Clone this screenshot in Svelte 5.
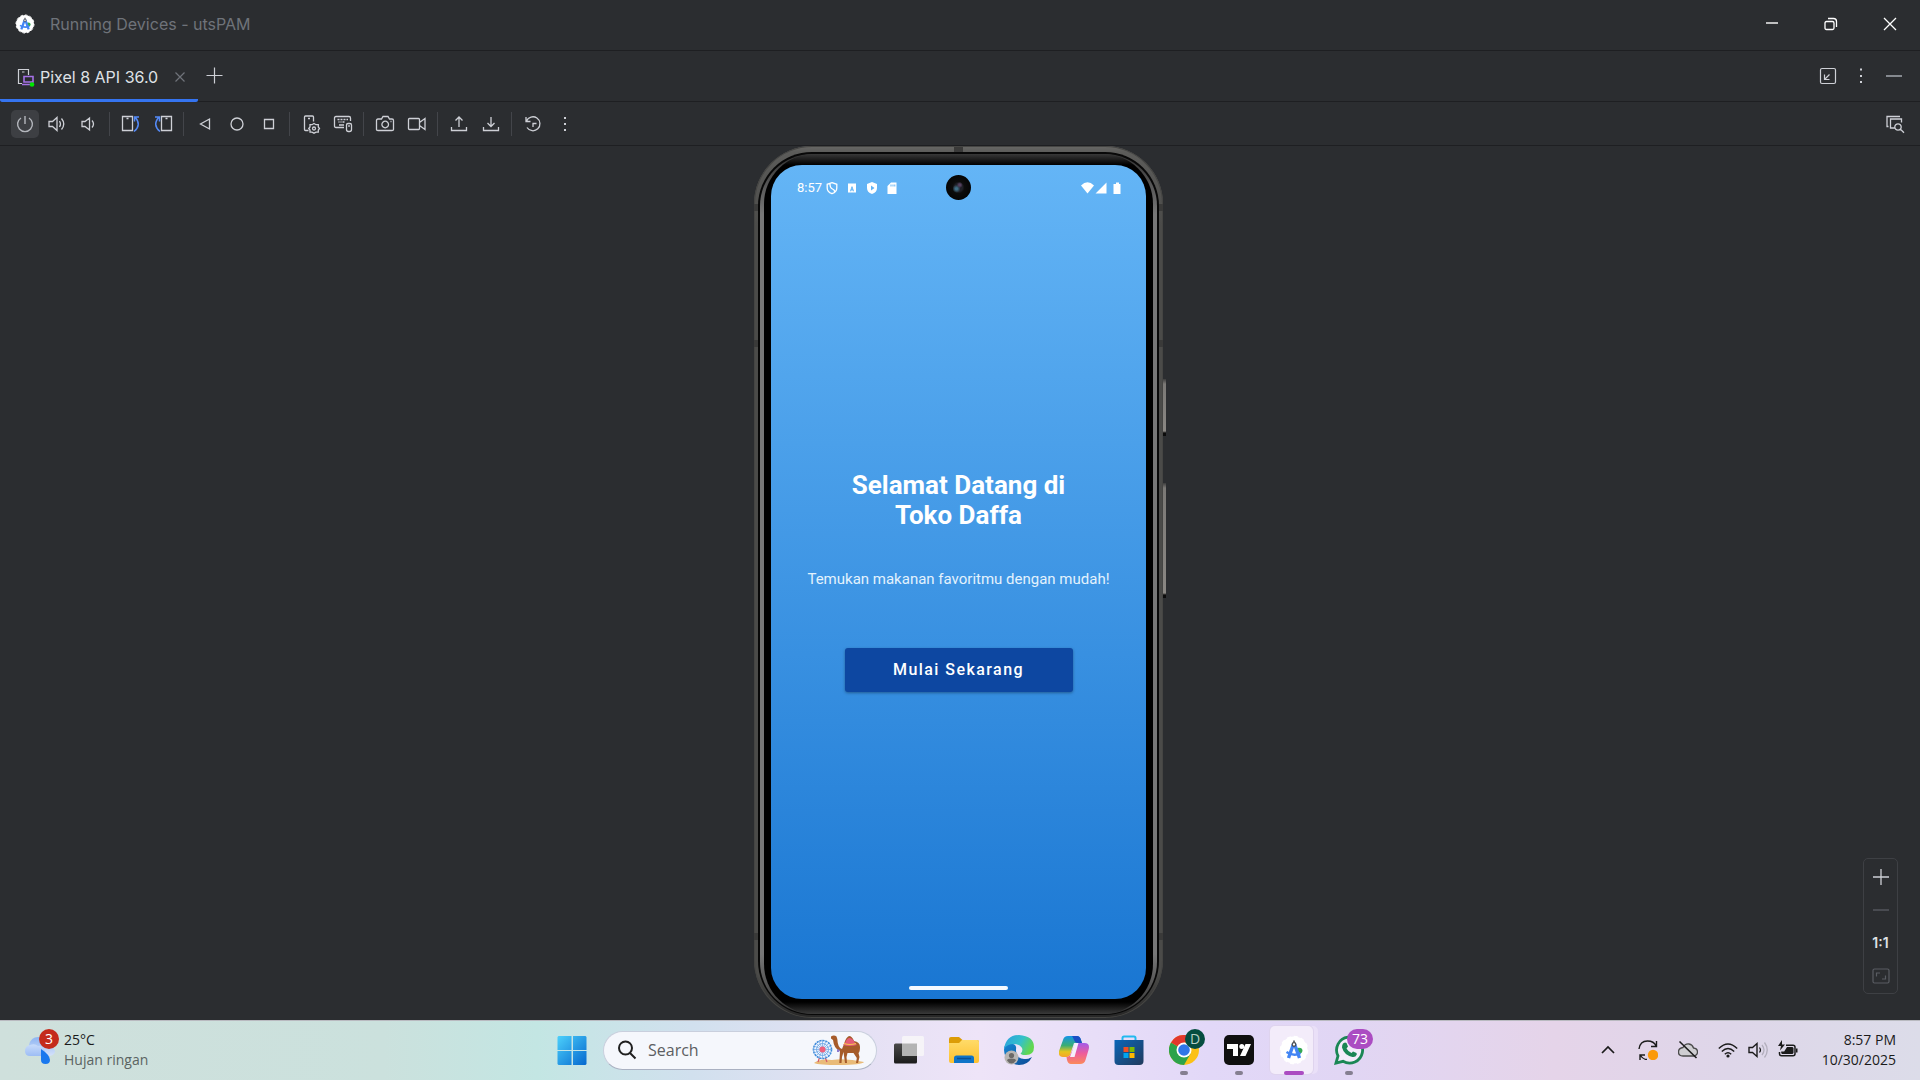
<script lang="ts">
  type Stroke = { d: string; color?: string; fill?: string; width?: number };
  type Tool = { label: string; active?: boolean; strokes: Stroke[] };

  const blue = '#548af7';
  const gray = '#ced0d6';

  const toolGroups: Tool[][] = [
    [
      { label: 'Power', active: true, strokes: [{ d: 'M6 4A7.400 7.400 0 1 0 14 4M10 2v8', color: '#b4b7bd', width: 1.4 }] },
      { label: 'Volume Up', strokes: [{ d: 'M2 7.500h3.500L10 3.500v13L5.500 12.500H2zM12.500 7q2 3 0 6M14.500 4.500q4.500 5.500 0 11' }] },
      { label: 'Volume Down', strokes: [{ d: 'M3 7.500h3L10.500 4v12L6 12.500H3zM13 6.500q3 3.500 0 7' }] },
    ],
    [
      { label: 'Rotate Left', strokes: [{ d: 'M1.500 2.500h10v14h-10zM5.500 4.500h2' }, { d: 'M13 17.500Q21 11 14 3M13.500 7.500V3H18', color: blue, width: 1.5 }] },
      { label: 'Rotate Right', strokes: [{ d: 'M8.500 2.500h10v14h-10zM12.500 4.500h2' }, { d: 'M7 17.500Q-1 11 6 3M6.500 7.500V3H2', color: blue, width: 1.5 }] },
    ],
    [
      { label: 'Back', strokes: [{ d: 'M14.500 5v10L5.500 10z' }] },
      { label: 'Home', strokes: [{ d: 'M16 10a6 6 0 1 1-12 0a6 6 0 1 1 12 0z' }] },
      { label: 'Overview', strokes: [{ d: 'M5.500 5.500h9v9h-9z' }] },
    ],
    [
      { label: 'Device Settings', strokes: [{ d: 'M12.500 7.500V3q0-1-1-1h-7q-1 0-1 1v12.500q0 1 1 1h3M7 4.500h2' }, { d: 'M13 9.500l2 1.200 2.300 0v2.300l1.200 1.500-1.200 1.500v2.200H15l-2 1-2-1H9v-2.200L7.700 14.500 9 13v-2.300h2zM14.500 14.500a1.500 1.500 0 1 1-3 0a1.500 1.500 0 1 1 3 0z' }] },
      { label: 'Hardware Input', strokes: [{ d: 'M11 13.500H3q-1.500 0-1.500-1.500V4q0-1.500 1.500-1.500h13q1.500 0 1.500 1.500v3M4.500 5.500h2m1 0h2m1 0h2m1 0h1.500M5.500 8h1m1 0h1m1 0h2M6 11h5M13.500 11q0-1.500 1.500-1.500h2q1.500 0 1.500 1.500v4.500q0 2-2 2h-1q-2 0-2-2zM16 11v2' }] },
    ],
    [
      { label: 'Take Screenshot', strokes: [{ d: 'M3 5h3.500L8 2.500h5L14.500 5H17q1.500 0 1.500 1.500v9q0 1-1.500 1H3q-1.500 0-1.500-1v-9Q1.500 5 3 5zM13.500 10.500a3.300 3.300 0 1 1-6.600 0a3.300 3.300 0 1 1 6.600 0z' }, { d: 'M15.500 7.500h1' }] },
      { label: 'Record Screen', strokes: [{ d: 'M2.500 4.500h9q1 0 1 1v9q0 1-1 1h-9q-1 0-1-1v-9q0-1 1-1zM12.500 8.500l5.500-4v11l-5.500-4' }] },
    ],
    [
      { label: 'Upload', strokes: [{ d: 'M2.500 13v3.500h15V13M10 13V3M6.500 6.500L10 3l3.500 3.500' }] },
      { label: 'Download', strokes: [{ d: 'M2.500 13v3.500h15V13M10 3v9.500M6.500 9l3.500 3.500L13.500 9' }] },
    ],
    [
      { label: 'Snapshots', strokes: [{ d: 'M3 3v4.500h4.500M3.500 7A7 7 0 1 1 4 13.500M10 13V9.500h3.500' }] },
      { label: 'More Actions', strokes: [{ d: 'M9 3h2v2H9zM9 9h2v2H9zM9 15h2v2H9z', fill: gray, width: 0 }] },
    ],
  ];
</script>

{#snippet icon(strokes: Stroke[])}
  <svg class="ic" viewBox="0 0 20 20" aria-hidden="true">
    {#each strokes as s}
      <path d={s.d} fill={s.fill ?? 'none'} stroke={s.color ?? gray} stroke-width={s.width ?? 1.3} />
    {/each}
  </svg>
{/snippet}

{#snippet studio()}
  <circle cx="15" cy="15" r="13.500" fill="#fff" />
  <circle cx="15" cy="15" r="13.500" fill="none" stroke="#fff" stroke-width="1.500" stroke-dasharray="4 3" />
  <path d="M18 13q5.500-1 5.500 3l-1 2-3 1z" fill="#34a853" />
  <path d="M14.500 9L9.500 23M15.500 9L20.500 23" stroke="#4285f4" stroke-width="3.400" fill="none" />
  <path d="M7.500 17q7.500 5 14 1" stroke="#4285f4" stroke-width="2.400" fill="none" />
  <circle cx="15" cy="9.500" r="1.800" fill="#fff" stroke="#4a4e53" stroke-width="1.300" />
  <path d="M15 5.500v2" stroke="#4a4e53" stroke-width="1.600" />
{/snippet}

<div class="desktop">
  <header class="titlebar">
    <svg class="logo" viewBox="0 0 30 30" aria-hidden="true">{@render studio()}</svg>
    <h1>Running Devices - utsPAM</h1>
    <div class="winctl">
      <button aria-label="Minimize"><svg class="ic" viewBox="0 0 20 20"><path d="M4 9h12" stroke="#fff" stroke-width="1.400" /></svg></button>
      <button aria-label="Restore"><svg class="ic" viewBox="0 0 20 20"><path d="M5.500 7.500h6q1.500 0 1.500 1.500v5q0 1.500-1.500 1.500h-6Q4 15.500 4 14V9q0-1.500 1.500-1.500zM7 4.500h5.500q3 0 3 3V13" fill="none" stroke="#fff" stroke-width="1.300" /></svg></button>
      <button aria-label="Close"><svg class="ic" viewBox="0 0 20 20"><path d="M4 4l12 12M16 4L4 16" stroke="#fff" stroke-width="1.300" /></svg></button>
    </div>
  </header>

  <nav class="tabs">
    <div class="tab">
      <svg class="ic" viewBox="0 0 20 20" aria-hidden="true">
        <path d="M6 16.500H2.500v-14h10V8M6 5h2.500" fill="none" stroke={gray} stroke-width="1.200" />
        <path d="M8 9.500h9v5.500H8zM6 17.500h8" fill="none" stroke="#a571e6" stroke-width="1.600" />
        <circle cx="16" cy="17.500" r="2.300" fill="#00e800" />
      </svg>
      <button class="tabname">Pixel 8 API 36.0</button>
      <button class="close" aria-label="Close tab"><svg class="ic" viewBox="0 0 20 20"><path d="M5.500 5.500l9 9M14.500 5.500l-9 9" stroke="#6f737a" stroke-width="1.200" /></svg></button>
    </div>
    <button class="add" aria-label="Add device"><svg class="ic" viewBox="0 0 20 20"><path d="M10.500 1.500v16M2.500 9.500h16" stroke={gray} stroke-width="1.200" /></svg></button>
    <div class="tabactions">
      <button aria-label="Dock"><svg class="ic" viewBox="0 0 20 20"><path d="M4 2.500h12q1.500 0 1.500 1.500v12q0 1.500-1.500 1.500H4Q2.500 17.500 2.500 16V4Q2.500 2.500 4 2.500zM11.500 8.500L6.500 13.500M6.500 8.500v5h5" fill="none" stroke={gray} stroke-width="1.200" /></svg></button>
      <button aria-label="Options"><svg class="ic" viewBox="0 0 20 20"><path d="M9 2.500h2v2H9zM9 9h2v2H9zM9 15h2v2H9z" fill={gray} /></svg></button>
      <button aria-label="Hide"><svg class="ic" viewBox="0 0 20 20"><path d="M2 10h16" stroke="#9da0a8" stroke-width="1.600" /></svg></button>
    </div>
  </nav>

  <div class="toolbar">
    {#each toolGroups as group, g}
      {#if g > 0}<span class="sep"></span>{/if}
      {#each group as tool}
        <button class="tool" class:active={tool.active} aria-label={tool.label}>{@render icon(tool.strokes)}</button>
      {/each}
    {/each}
    <button class="tool last" aria-label="UI Check">
      {@render icon([{ d: 'M3.500 12.500H2v-10h13M10 14H5.500V5h11v3.500M16.200 13a3.200 3.200 0 1 1-6.400 0a3.200 3.200 0 1 1 6.400 0zM15.500 15.300l3.500 3.500' }])}
    </button>
  </div>

  <main>
    <div class="device">
      <div class="shell">
        <div class="groove"><div class="rail"><div class="bezel">
          <div class="screen">
            <div class="status">
              <span>8:57</span>
              <svg viewBox="0 0 12 14" width="12" height="14"><path d="M6 1.700L10.800 3.300V7q0 4-4.800 5.700Q1.200 11 1.200 7V3.300zM4 3q0 4 2.500 5T8.500 11" fill="none" stroke="#fff" stroke-width="1.300" /></svg>
              <svg viewBox="0 0 12 14" width="12" height="14"><path fill-rule="evenodd" d="M2 2.500h8v9H2zM4 10.300h1.200l.3-1h1l.3 1H8L6.500 5.500h-1zM5.700 8.200h.6L6 6.800z" fill="#fff" /></svg>
              <svg viewBox="0 0 12 14" width="12" height="14"><path fill-rule="evenodd" d="M6 1L11 3v4q0 4.500-5 6Q1 11.500 1 7V3zM5 4.500v5L8.500 7z" fill="#fff" /></svg>
              <svg viewBox="0 0 12 14" width="12" height="14"><path fill-rule="evenodd" d="M5 1.500h5.500v11.500h-9V5zM4.500 3.500v2h1v-2zM6.500 3.500v2h1v-2zM8.300 3.500v2h1v-2z" fill="#fff" /></svg>
              <svg class="signal" viewBox="0 0 42 14" width="42" height="14"><path d="M1 4.500q6.500-6.500 13 0L7.500 12.500zM15.500 12.500h11V1.500zM33.500 3H36V1.500h3V3h1.500v10h-7z" fill="#fff" /></svg>
            </div>
            <div class="welcome">
              <h2>Selamat Datang di<br />Toko Daffa</h2>
              <p>Temukan makanan favoritmu dengan mudah!</p>
              <button>Mulai Sekarang</button>
            </div>
            <div class="gesture"><span></span></div>
            <span class="camera"></span>
          </div>
        </div></div></div>
      </div>
      <i class="key power"></i>
      <i class="key volume"></i>
      <i class="band left high"></i><i class="band left mid"></i><i class="band left low"></i>
      <i class="band right high"></i><i class="band right mid"></i><i class="band right low"></i>
      <i class="band top"></i>
    </div>

    <div class="zoom">
      <button aria-label="Zoom In"><svg class="ic" viewBox="0 0 20 20"><path d="M10 2v16M2 10h16" stroke={gray} stroke-width="1.300" /></svg></button>
      <button aria-label="Zoom Out"><svg class="ic" viewBox="0 0 20 20"><path d="M2 10h16" stroke="#5a5d63" stroke-width="1.300" /></svg></button>
      <button>1:1</button>
      <button aria-label="Zoom to Fit"><svg class="ic" viewBox="0 0 20 20"><path d="M3.500 3h13q1.500 0 1.500 1.500v11q0 1.500-1.500 1.500h-13Q2 17 2 15.500v-11Q2 3 3.500 3zM5.500 10.500V7H9M14.500 9.500V13H11" fill="none" stroke="#5a5d63" stroke-width="1.200" /></svg></button>
    </div>
  </main>

  <footer class="taskbar">
    <button class="weather">
      <span class="wicon">
        <svg viewBox="0 0 32 30" width="32" height="30" aria-hidden="true">
          <defs>
            <linearGradient id="cloud" x2="0" y2="1"><stop stop-color="#8db4f2" /><stop offset="1" stop-color="#d5e2fa" /></linearGradient>
            <linearGradient id="cloud2" x2="0" y2="1"><stop stop-color="#c9dcfb" /><stop offset="1" stop-color="#9dbdf5" /></linearGradient>
          </defs>
          <path d="M5 10Q7 1 16 2q9 0 10 9 5 2 5 6-1 4-7 4H9z" fill="url(#cloud)" />
          <path d="M6 21q-5 0-5-5t5-6q5-2 8 1 3-1 5 2 4 4 1 8z" fill="url(#cloud2)" />
          <path d="M17 14q9 6 9 11 0 4-4.500 4T17 25z" fill="#1a78ee" />
        </svg>
        <b>3</b>
      </span>
      <span class="lines"><span>25°C</span><span class="dim">Hujan ringan</span></span>
    </button>

    <div class="apps">
      <button class="app start" aria-label="Start">
        <svg viewBox="0 0 30 30">
          <defs><linearGradient id="win" x2="1" y2="1"><stop stop-color="#4cd0fb" /><stop offset="1" stop-color="#0568cf" /></linearGradient></defs>
          <path d="M1.500 1h13v14h-14V2zM16 1h12.500l1 1v13H16zM.5 16h14v14h-13l-1-1zM16 16h13.500v13l-1 1H16z" fill="url(#win)" />
        </svg>
      </button>
      <label class="search">
        <svg class="ic" viewBox="0 0 20 20" aria-hidden="true"><path d="M15 8a6.500 6.500 0 1 1-13 0a6.500 6.500 0 1 1 13 0zM13 13l5.500 5.500" fill="none" stroke="#202020" stroke-width="2" /></svg>
        <input type="text" placeholder="Search" aria-label="Search" />
        <svg class="camel" viewBox="0 0 54 32" aria-hidden="true">
          <path d="M2 29q6-5 18-3 14-2 32 2-2 3-25 3-20 0-25-2z" fill="#e9bb78" />
          <path d="M10 16L6 28M10 16l5 12" stroke="#d5576b" stroke-width="1.200" />
          <circle cx="10.500" cy="15.500" r="9" fill="#eef4ff" stroke="#3e8bda" stroke-width="1.600" stroke-dasharray="2.200 .8" />
          <circle cx="10.500" cy="15.500" r="6" fill="none" stroke="#7ab1e8" stroke-width="1" />
          <path d="M10.500 6v19M1 15.500h19M4 9l13 13M17 9L4 22M7 7l7 17M14 7L7 24M2 12l17 7M19 12L2 19" stroke="#6ba5e2" stroke-width=".7" />
          <circle cx="10.500" cy="15.500" r="3" fill="#f0607c" />
          <path d="M19 2.500q3-2 5.500 0l.8 2.500q.5 9 4.700 10l2-5q2-7 5-8 3 0 5 5 6 1 6 6 0 5-1.500 6l1 4-1.500 6h-2l.8-5-3.300-5h-6l-1 4 .5 6h-2l-.8-6-.7-5-1.500 5-.5 6h-2.200l.7-12q-6-2-7-11L19 4.500z" fill="#a65b2a" />
          <path d="M33 9q2-5 4.500-5 3 0 5.500 5l2 2q-7 2-14 0z" fill="#e45d78" />
          <path d="M32 9.500q6 2 12 0" stroke="#f7c64b" stroke-width="1.200" fill="none" />
          <path d="M25 15l3 1-1 2h-2z" fill="#8c7bd0" />
        </svg>
      </label>
      <button class="app" aria-label="Task View">
        <svg viewBox="0 0 30 30">
          <defs><linearGradient id="tv" x2="0" y2="1"><stop stop-color="#4a4a4a" /><stop offset="1" stop-color="#1b1b1b" /></linearGradient></defs>
          <rect x="0" y="8.500" width="23" height="20" rx="1.500" fill="url(#tv)" /><rect x="8" y="1" width="22" height="20" rx="1.500" fill="#f6f4f8" /><path d="M8 8.500h15V21H9.500Q8 21 8 19.500z" fill="#b3b3b3" />
        </svg>
      </button>
      <button class="app" aria-label="File Explorer">
        <svg viewBox="0 0 30 30">
          <defs><linearGradient id="fold" x2="0" y2="1"><stop stop-color="#ffdb69" /><stop offset="1" stop-color="#fdc02f" /></linearGradient></defs>
          <path d="M0 4q0-2 2-2h8l3.500 3H28q2 0 2 2v4H0z" fill="#dc9c07" /><path d="M0 8h10l3-3h15q2 0 2 2v19q0 2-2 2H2q-2 0-2-2z" fill="url(#fold)" /><path d="M5 28v-5q0-2.500 2.500-2.500h15Q25 20.500 25 23v5z" fill="#0f74c8" /><path d="M8 23.500h14" stroke="#0a4f94" stroke-width="1.500" />
        </svg>
      </button>
      <button class="app" aria-label="Edge">
        <svg viewBox="0 0 30 30">
          <defs>
            <linearGradient id="e1" x2="1" y2=".4"><stop stop-color="#2a9fe1" /><stop offset=".6" stop-color="#35c1c9" /><stop offset="1" stop-color="#62d74f" /></linearGradient>
            <linearGradient id="e2" x2="1" y2="1"><stop stop-color="#1687d4" /><stop offset="1" stop-color="#0c4a94" /></linearGradient>
          </defs>
          <path d="M0 15q0-9 9-6 4 1 3 6 0 9 9 9 4 0 7-2-4 8-13 8Q1 29 0 15z" fill="url(#e2)" />
          <path d="M0 14Q2 0 15 0q15 1 15 12 0 8-8 8-6 0-6-2 3-2 2-5-2-4-8-4Q3 9 0 14z" fill="url(#e1)" />
          <path d="M12 14q3-3 6-.5 1 3-1.500 5 1 2 4 3 3 1 7 0-3 3-8 2-7-2-7.500-9.500z" fill="#eee6fa" />
          <circle cx="7.500" cy="22.500" r="7" fill="#b8b6b4" /><circle cx="7.500" cy="20.500" r="2.600" fill="#6b6967" /><path d="M3 25.500q0-2 4.500-2t4.500 2q-2 3-4.500 3t-4.500-3z" fill="#6b6967" />
        </svg>
      </button>
      <button class="app" aria-label="Copilot">
        <svg viewBox="0 0 30 30">
          <defs>
            <linearGradient id="c1" x2="0" y2="1"><stop stop-color="#1494e8" /><stop offset=".45" stop-color="#39ad74" /><stop offset=".75" stop-color="#e6c51e" /><stop offset="1" stop-color="#f5a52a" /></linearGradient>
            <linearGradient id="c2" x2="0" y2="1"><stop stop-color="#a25bea" /><stop offset=".5" stop-color="#ee5c9a" /><stop offset="1" stop-color="#fb8a5a" /></linearGradient>
          </defs>
          <path d="M9 1h9q3 0 4 4l1 3h-8l-4 12q-1 2-3 2H4q-5 0-4-6L4 5q1-4 5-4z" fill="url(#c1)" />
          <path d="M13 1h5q3 0 4 4l1 3h-5q-2 0-3-3-1-3-2-4z" fill="#1c4fc4" />
          <path d="M21 29h-9q-3 0-4-4l-.5-3q3 0 4-3l4-8q1-3 3-3h7q6 0 4 7l-3 10q-1 4-5.500 4z" fill="url(#c2)" />
          <path d="M16 8h3.500l-4 14H11z" fill="#f5eefb" />
        </svg>
      </button>
      <button class="app" aria-label="Microsoft Store">
        <svg viewBox="0 0 30 30">
          <defs><linearGradient id="st" x2="1" y2="1"><stop stop-color="#0b66b8" /><stop offset="1" stop-color="#213a5c" /></linearGradient></defs>
          <path d="M8.500 6V3q0-1.500 1.500-1.500h10q1.500 0 1.500 1.500v3" fill="none" stroke="#22b9ef" stroke-width="2" /><path d="M.5 5h29v21q0 4-4 4h-21q-4 0-4-4z" fill="url(#st)" />
          <path d="M9.500 12H14.500v5H9.500z" fill="#f25022" /><path d="M15.500 12h5v5h-5z" fill="#7fba00" /><path d="M9.500 18h5v5h-5z" fill="#00a4ef" /><path d="M15.500 18h5v5h-5z" fill="#ffb900" />
        </svg>
      </button>
      <button class="app running" aria-label="Chrome">
        <svg viewBox="0 0 30 30">
          <circle cx="15" cy="15" r="15" fill="#fbc116" /><path d="M15 15L2 7.500A15 15 0 0 0 15 30l6.500-11.200z" fill="#2da34b" /><path d="M15 15L2 7.500A15 15 0 0 1 28 7.500H15z" fill="#e2382c" />
          <circle cx="15" cy="15" r="7.500" fill="#fff" /><circle cx="15" cy="15" r="5.800" fill="#2f76e8" />
        </svg>
        <b class="badge profile">D</b>
      </button>
      <button class="app running" aria-label="TradingView">
        <svg viewBox="0 0 30 30"><rect width="30" height="30" rx="5" fill="#101010" /><path d="M3 9h11v12H9v-7H3zM21.500 9H27l-5.500 12H16z" fill="#fff" /><circle cx="17.800" cy="11.500" r="2.500" fill="#fff" /></svg>
      </button>
      <button class="app running current" aria-label="Android Studio">
        <svg viewBox="0 0 30 30">{@render studio()}</svg>
      </button>
      <button class="app running" aria-label="WhatsApp">
        <svg viewBox="0 0 30 30">
          <path d="M2 28l2-7A13 13 0 1 1 9 26.300z" fill="#f3ecfa" stroke="#1b8755" stroke-width="2.800" />
          <path d="M9 8.500l2-1 1.500.5 1.500 3.500-1.500 2q2 3.500 5 4.500l1.500-1.500 3.500 1.500.3 1.500q-1.300 3-4.300 2.500Q10 20 8 12.500 8 10 9 8.500z" fill="#1b8755" />
        </svg>
        <b class="badge count">73</b>
      </button>
    </div>

    <div class="tray">
      <button class="chev" aria-label="Show hidden icons"><svg class="ic" viewBox="0 0 20 20"><path d="M4 13l6-6 6 6" fill="none" stroke="#1b1b1b" stroke-width="1.700" /></svg></button>
      <button class="wide" aria-label="Update"><svg class="ic" viewBox="0 0 20 20"><path d="M1 9Q2 1 9.500 1 16 1 18 6M18.500 1v5.500H13M2 20v-5h5M2.500 15.500Q5 19.500 9 19.500" fill="none" stroke="#1b1b1b" stroke-width="1.400" /><circle cx="15" cy="15" r="5.200" fill="#fb9a0b" /></svg></button>
      <button class="wide" aria-label="OneDrive"><svg class="ic" viewBox="0 0 20 20"><path d="M5 16q-4.500 0-4.500-4T5 7.500Q7 3.500 11 4q3.500.5 4.500 4 4 .5 4 4T15.500 16z" fill="#cfced2" stroke="#4a4a4a" stroke-width="1.300" /><path d="M1.500 1.500L18.500 18" stroke="#1b1b1b" stroke-width="1.600" /></svg></button>
      <button class="status-set" aria-label="Network, volume and battery">
        <svg class="ic" viewBox="0 0 20 20"><path d="M.8 8.500q9.200-9 18.400 0M3.800 11.500q6.200-6 12.400 0M6.800 14.300q3.200-3 6.400 0" fill="none" stroke="#1b1b1b" stroke-width="1.400" /><circle cx="10" cy="16" r="1.600" fill="#1b1b1b" /></svg>
        <svg class="ic" viewBox="0 0 20 20"><path d="M1 7.500h3.500L9 3.500v13L4.500 12.500H1z" fill="none" stroke="#1b1b1b" stroke-width="1.400" /><path d="M11.500 7.500q2 2.500 0 5" fill="none" stroke="#1b1b1b" stroke-width="1.200" /><path d="M14 5q4 5 0 10M16.500 2.500q5.500 7.500 0 15" fill="none" stroke="#b3afbd" stroke-width="1.300" /></svg>
        <svg class="ic" viewBox="0 0 20 20"><path d="M8 5.200h7q2 0 2 2v6.600q0 2-2 2H3.500q-2 0-2-2V12" fill="none" stroke="#1b1b1b" stroke-width="1.500" /><path d="M9 7h5.500l1 1v5l-1 1H4l-.8-1V11.500h3zM18 8.500h1.500v4H18zM4 0L0 6h3L2 10.500 7 4.500H4z" fill="#1b1b1b" /></svg>
      </button>
      <button class="clock lines"><span>8:57 PM</span><span>10/30/2025</span></button>
    </div>
  </footer>
</div>

<style>
  :global(body) { margin: 0; background: #2b2d30; }
  .desktop { display: flex; flex-direction: column; min-height: 100vh; font-family: Inter, "Liberation Sans", sans-serif; font-size: 16px; line-height: 20px; color: #dfe1e5; }
  button { display: flex; align-items: center; justify-content: center; padding: 0; border: 0; background: none; color: inherit; font: inherit; }
  svg { display: block; flex: none; }
  .ic { width: 20px; height: 20px; }

  .titlebar, .tabs, .toolbar { display: flex; align-items: center; box-sizing: border-box; border-bottom: 1px solid #1e1f22; }
  .titlebar { height: 51px; padding: 0 1px 2px 15px; }
  .logo { width: 20px; height: 20px; }
  h1 { margin: 0 0 0 15px; font-size: 16px; font-weight: 400; color: #6f737a; }
  .winctl { display: flex; margin-left: auto; }
  .winctl button { width: 59px; height: 50px; }

  .tabs { height: 51px; padding-right: 16px; }
  .tab { display: flex; align-items: center; align-self: flex-start; box-sizing: border-box; height: 51px; padding: 4px 8px 0 16px; border-bottom: 3px solid #3574f0; border-radius: 0 0 2px 2px; }
  .tabname { margin-left: 4px; }
  .close { margin-left: 12px; }
  .add { margin-left: 6px; }
  .tabactions { display: flex; gap: 13px; margin-left: auto; }

  .toolbar { height: 44px; padding: 0 11px; gap: 4px; }
  .tool { width: 28px; height: 28px; border-radius: 5px; }
  .active { background: #3d3f43; }
  .last { margin-left: auto; }
  .sep { width: 1px; height: 24px; margin: 0 3px 0 2px; background: #43454a; }

  main { position: relative; display: flex; flex: 1; justify-content: center; padding-bottom: 2px; }
  .device { position: relative; display: flex; width: 409px; padding-right: 3px; }
  .shell { display: flex; flex: 1; box-sizing: border-box; padding: 6px 4px 3px; border-radius: 58px; background: linear-gradient(#686866, #5c5c5a 6px, #4b4b49 80px, #4b4b49 95%, #262626); box-shadow: inset 0 0 0 1px #454543; }
  .groove { display: flex; flex: 1; padding: 2px 2px 1px; border-radius: 54px; background: #080808; }
  .rail { display: flex; flex: 1; padding: 0 4px; border-radius: 52px; background: linear-gradient(#333, #777 60px, #777 calc(100% - 60px), #333); }
  .bezel { display: flex; flex: 1; padding: 11px 7px 15px; border-radius: 50px; background: linear-gradient(#383838, #000 11px, #000 calc(100% - 12px), #3a3a3a); }
  .screen { position: relative; display: flex; flex: 1; flex-direction: column; border-radius: 31px; background: linear-gradient(#64b5f6, #1976d2); color: #fff; font-family: Roboto, sans-serif; }
  .status { display: flex; align-items: center; box-sizing: border-box; height: 46px; padding: 0 24px 0 26px; gap: 8px; font-size: 13px; }
  .status span { margin-right: -4px; }
  .signal { margin-left: auto; }
  .welcome { display: flex; flex: 1; flex-direction: column; align-items: center; justify-content: center; padding-bottom: 3px; text-align: center; }
  h2 { margin: 0; font-size: 26px; line-height: 30px; font-weight: 700; }
  p { margin: 39px 0 59px; font-size: 15px; line-height: 20px; color: #e3f2fd; }
  .welcome button { width: 228px; height: 44px; border-radius: 3px; background: #0d47a1; box-shadow: 0 1px 3px rgb(0 0 0 / 35%); font-size: 16px; font-weight: 500; letter-spacing: 0.09em; }
  .gesture { display: flex; align-items: flex-end; justify-content: center; box-sizing: border-box; height: 46px; padding-bottom: 9px; }
  .gesture span { width: 99px; height: 4px; border-radius: 2px; background: #f4f9ff; }
  .camera { position: absolute; top: 10px; left: 50%; width: 25px; height: 25px; margin-left: -13px; border-radius: 50%; background: radial-gradient(circle at 55% 40%, #54405e 0 1px, transparent 3px), radial-gradient(circle at 42% 55%, #3f6f86 0 1px, transparent 4px), radial-gradient(circle, #202028 0 4px, #0c0c0c 6px, #000); }
  .key { position: absolute; right: 0; width: 3px; background: linear-gradient(#3c3c3c, #7b7976 5px, #8a8783 calc(100% - 5px), #0c0c0c calc(100% - 3px)); }
  .power { top: 233px; height: 57px; }
  .volume { top: 337px; height: 115px; }
  .band { position: absolute; background: #3a3a39; }
  .left, .right { width: 4px; height: 7px; }
  .left { left: 0; }
  .right { right: 3px; }
  .high { top: 58px; }
  .mid { top: 194px; }
  .low { bottom: 78px; }
  .top { top: 1px; left: 200px; width: 9px; height: 5px; }

  .zoom { position: absolute; right: 22px; bottom: 26px; display: grid; box-sizing: border-box; width: 35px; padding: 1px 0; border: 1px solid #3e4044; border-radius: 5px; }
  .zoom button { height: 33px; font-size: 14px; font-weight: 600; }

  .taskbar { display: grid; grid-template-columns: 1fr auto 1fr; align-items: center; box-sizing: border-box; height: 60px; padding-bottom: 2px; border-top: 1px solid #b9bac0; background: linear-gradient(90deg, #cfe0dc, #cbe1dd 20%, #c3e6e3 28%, #d1e0ee 36%, #e5e1f4 45%, #eee4f8 51%, #e2d8f8 63%, #e1d6f4 70%, #e5d4e9 81%, #ded6e9 90%, #dcdce9); color: #1b1b1b; font-family: "Open Sans", "Noto Sans", sans-serif; font-size: 14px; }
  .weather { justify-self: start; padding-left: 24px; gap: 8px; }
  .wicon { position: relative; }
  .wicon b { position: absolute; top: -6px; right: -3px; width: 20px; height: 20px; border-radius: 50%; background: #c42b1c; color: #fff; font-weight: 400; text-align: center; }
  .lines { display: flex; flex-direction: column; align-items: flex-start; line-height: 20px; }
  .dim { color: #5b6462; }
  .apps { display: flex; align-items: center; }
  .app { position: relative; width: 55px; height: 58px; }
  .app > svg { width: 30px; height: 30px; }
  .search { display: flex; align-items: center; box-sizing: border-box; width: 274px; height: 39px; margin: 0 4px; padding: 0 10px 0 13px; border: 1px solid #c9cfdd; border-bottom-color: #aab1c2; border-radius: 20px; background: #f5f7fc; }
  .search input { flex: 1; min-width: 0; margin-left: 11px; padding: 0; border: 0; outline: 0; background: none; color: #1b1b1b; font: inherit; font-size: 16px; }
  .search input::placeholder { color: #5c5e62; opacity: 1; }
  .camel { width: 54px; height: 32px; }
  .running::after { content: ""; position: absolute; bottom: 4px; left: 50%; width: 8px; height: 4px; margin-left: -4px; border-radius: 2px; background: #857f90; }
  .current { isolation: isolate; }
  .current::before { content: ""; position: absolute; z-index: -1; top: 5px; bottom: 5px; left: 4px; width: 43px; border-radius: 5px; background: #f3ecfa; box-shadow: 0 0 0 1px #dfd4ee, 5px 0 0 #eae0f8; }
  .current::after { width: 20px; margin-left: -10px; background: #ab4cc2; }
  .badge { position: absolute; top: 8px; height: 20px; border-radius: 10px; color: #fff; font-weight: 400; text-align: center; }
  .profile { right: 6px; width: 20px; background: #054d40; color: #b7cfc5; }
  .count { right: 3px; width: 26px; background: #ab4cc2; }
  .tray { display: flex; align-items: center; justify-self: end; padding-right: 24px; }
  .wide { margin-left: 20px; }
  .status-set { gap: 10px; margin-left: 20px; }
  .clock { align-items: flex-end; margin-left: 24px; }
</style>
